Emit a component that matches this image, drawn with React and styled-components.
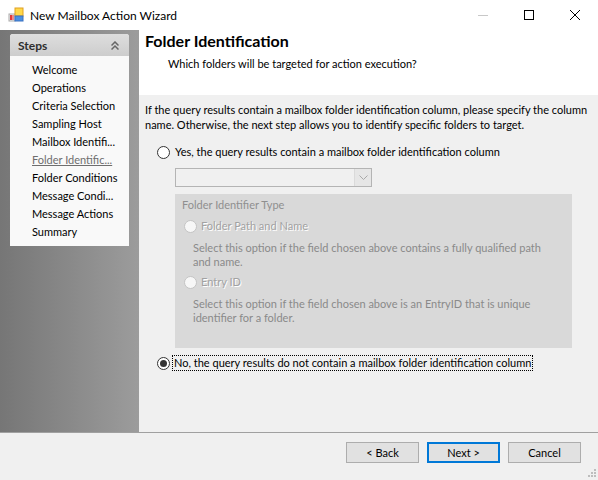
import React from 'react';
import styled, { createGlobalStyle } from 'styled-components';

const Global = createGlobalStyle`
  html, body { margin: 0; padding: 0; background: #f0f0f0; }
  body { font-family: Lato, "Noto Sans", sans-serif; font-size: 11px; color: #000; }
  #root { width: 598px; height: 480px; }
  * { box-sizing: border-box; }
`;

const Window = styled.div`
  width: 598px;
  height: 480px;
  display: flex;
  flex-direction: column;
  overflow: hidden;
  position: relative;
`;

const TitleBar = styled.div`
  height: 30px;
  flex-shrink: 0;
  background: #fff;
  display: flex;
  align-items: center;
  padding-left: 8px;
`;

const TitleText = styled.span`
  margin-left: 6px;
  font-size: 12px;
  color: #000;
`;

const Controls = styled.div`
  margin-left: auto;
  display: flex;
  height: 30px;
`;

const ControlButton = styled.div`
  width: 46px;
  height: 30px;
  display: flex;
  align-items: center;
  justify-content: center;
`;

const Main = styled.div`
  height: 402px;
  flex-shrink: 0;
  display: flex;
`;

const Sidebar = styled.div`
  width: 139px;
  flex-shrink: 0;
  background: linear-gradient(to right, #767676, #9c9c9c);
  padding: 4px 10px 0 10px;
`;

const StepsBox = styled.div`
  background: #f9f9f9;
  border-radius: 3px 3px 0 0;
  overflow: hidden;
`;

const StepsHeader = styled.div`
  height: 22px;
  display: flex;
  align-items: center;
  justify-content: space-between;
  padding: 0 10px 0 8px;
  background: linear-gradient(#dedede, #cdcdcd);
  font-size: 12px;
  font-weight: bold;
  color: #2e2e2e;
`;

const StepsList = styled.div`
  padding: 5px 0 5px 22px;
`;

const StepItem = styled.div`
  line-height: 18px;
  white-space: nowrap;
  color: ${p => (p.$current ? '#6e6e6e' : '#000')};
  text-decoration: ${p => (p.$current ? 'underline' : 'none')};
`;

const Content = styled.div`
  flex: 1;
  display: flex;
  flex-direction: column;
`;

const PageHeader = styled.div`
  height: 65px;
  flex-shrink: 0;
  background: #fff;
  padding: 1px 0 0 6px;
`;

const PageTitle = styled.div`
  font-size: 16px;
  font-weight: bold;
  line-height: 20px;
`;

const PageSubtitle = styled.div`
  margin: 5px 0 0 23px;
  line-height: 16px;
`;

const Body = styled.div`
  flex: 1;
  background: #f0f0f0;
  padding: 7px 8px 0 6px;
  display: flex;
  flex-direction: column;
  align-items: flex-start;
`;

const Paragraph = styled.div`
  line-height: 15px;
  white-space: nowrap;
`;

const RadioRow = styled.div`
  display: flex;
  align-items: center;
  height: 16px;
  margin: ${p => p.$margin || '0'};
  color: ${p => (p.$disabled ? '#a2a2a2' : '#000')};
  text-shadow: ${p => (p.$disabled ? '1px 1px 0 #fff' : 'none')};
`;

const RadioCircle = styled.span`
  width: 13px;
  height: 13px;
  border-radius: 50%;
  flex-shrink: 0;
  border: 1px solid ${p => (p.$disabled ? '#c4c4c4' : '#333')};
  background: ${p => (p.$disabled ? '#f7f7f7' : '#fff')};
  display: flex;
  align-items: center;
  justify-content: center;
  &::after {
    content: '';
    width: 7px;
    height: 7px;
    border-radius: 50%;
    background: ${p => (p.$checked ? '#333' : 'transparent')};
  }
`;

const RadioLabel = styled.span`
  margin-left: ${p => p.$gap || 3}px;
  padding: 0 1px;
  line-height: 14px;
  border: 1px ${p => (p.$focus ? 'dotted #000' : 'solid transparent')};
  white-space: nowrap;
`;

const Combo = styled.div`
  margin: 8px 0 0 30px;
  width: 197px;
  height: 19px;
  border: 1px solid #b4b4b4;
  background: #f0f0f0;
  display: flex;
  justify-content: flex-end;
`;

const ComboButton = styled.div`
  width: 17px;
  height: 100%;
  background: #e6e6e6;
  border-left: 1px solid #dadada;
  display: flex;
  align-items: center;
  justify-content: center;
`;

const Group = styled.div`
  margin: 7px 0 0 30px;
  width: 397px;
  height: 154px;
  background: #d9d9d9;
  padding: 4px 0 0 7px;
`;

const GroupTitle = styled.div`
  line-height: 14px;
  color: #8f8f8f;
`;

const Description = styled.div`
  margin: ${p => p.$margin || '0'};
  padding-left: 11px;
  line-height: 14px;
  color: #8a8a8a;
  white-space: nowrap;
`;

const Footer = styled.div`
  flex: 1;
  border-top: 1px solid #a0a0a0;
  background: #f0f0f0;
  display: flex;
  justify-content: flex-end;
  align-items: flex-start;
  gap: 8px;
  padding: 9px 17px 0 0;
  position: relative;
`;

const Button = styled.div`
  width: 73px;
  height: 21px;
  display: flex;
  align-items: center;
  justify-content: center;
  background: #e1e1e1;
  border: ${p => (p.$default ? '2px solid #0078d7' : '1px solid #adadad')};
  color: #000;
`;

const Grip = styled.svg`
  position: absolute;
  right: 2px;
  bottom: 2px;
`;

const steps = [
  'Welcome',
  'Operations',
  'Criteria Selection',
  'Sampling Host',
  'Mailbox Identifi...',
  'Folder Identific...',
  'Folder Conditions',
  'Message Condi...',
  'Message Actions',
  'Summary',
];

export default function App() {
  return (
    <>
      <Global />
      <Window>
        <TitleBar>
          <svg width="16" height="16" viewBox="0 0 16 16">
            <rect x="1" y="7" width="6" height="7" fill="#f3f3f3" stroke="#a9a9a9" />
            <rect x="2" y="8" width="2" height="5" fill="#e03a3a" />
            <rect x="4" y="8" width="2" height="5" fill="#f08a8a" />
            <rect x="7" y="1" width="8" height="8" fill="#ffd84a" stroke="#e0a020" />
            <rect x="7" y="9" width="8" height="5" fill="#4a90e2" stroke="#3a70c0" />
          </svg>
          <TitleText>New Mailbox Action Wizard</TitleText>
          <Controls>
            <ControlButton>
              <svg width="10" height="10" viewBox="0 0 10 10">
                <line x1="0" y1="5.5" x2="10" y2="5.5" stroke="#c8c8c8" strokeWidth="1" />
              </svg>
            </ControlButton>
            <ControlButton>
              <svg width="10" height="10" viewBox="0 0 10 10">
                <rect x="0.5" y="0.5" width="9" height="9" fill="none" stroke="#000" strokeWidth="1" />
              </svg>
            </ControlButton>
            <ControlButton>
              <svg width="10" height="10" viewBox="0 0 10 10">
                <path d="M0 0 L10 10 M10 0 L0 10" stroke="#000" strokeWidth="1" />
              </svg>
            </ControlButton>
          </Controls>
        </TitleBar>
        <Main>
          <Sidebar>
            <StepsBox>
              <StepsHeader>
                <span>Steps</span>
                <svg width="8" height="9" viewBox="0 0 8 9">
                  <path d="M0.5 4.5 L4 1 L7.5 4.5 M0.5 8.5 L4 5 L7.5 8.5" fill="none" stroke="#666" strokeWidth="1.5" />
                </svg>
              </StepsHeader>
              <StepsList>
                {steps.map(s => (
                  <StepItem key={s} $current={s === 'Folder Identific...'}>
                    {s}
                  </StepItem>
                ))}
              </StepsList>
            </StepsBox>
          </Sidebar>
          <Content>
            <PageHeader>
              <PageTitle>Folder Identification</PageTitle>
              <PageSubtitle>Which folders will be targeted for action execution?</PageSubtitle>
            </PageHeader>
            <Body>
              <Paragraph>
                If the query results contain a mailbox folder identification column, please specify the column
                <br />
                name. Otherwise, the next step allows you to identify specific folders to target.
              </Paragraph>
              <RadioRow $margin="12px 0 0 12px">
                <RadioCircle />
                <RadioLabel>Yes, the query results contain a mailbox folder identification column</RadioLabel>
              </RadioRow>
              <Combo>
                <ComboButton>
                  <svg width="9" height="5" viewBox="0 0 9 5">
                    <path d="M0.5 0.5 L4.5 4.5 L8.5 0.5" fill="none" stroke="#a8a8a8" strokeWidth="1" />
                  </svg>
                </ComboButton>
              </Combo>
              <Group>
                <GroupTitle>Folder Identifier Type</GroupTitle>
                <RadioRow $disabled $margin="6px 0 0 2px">
                  <RadioCircle $disabled />
                  <RadioLabel $gap={2}>Folder Path and Name</RadioLabel>
                </RadioRow>
                <Description $margin="7px 0 0 0">
                  Select this option if the field chosen above contains a fully qualified path
                  <br />
                  and name.
                </Description>
                <RadioRow $disabled $margin="5px 0 0 2px">
                  <RadioCircle $disabled />
                  <RadioLabel $gap={2}>Entry ID</RadioLabel>
                </RadioRow>
                <Description $margin="7px 0 0 0">
                  Select this option if the field chosen above is an EntryID that is unique
                  <br />
                  identifier for a folder.
                </Description>
              </Group>
              <RadioRow $margin="7px 0 0 12px">
                <RadioCircle $checked />
                <RadioLabel $gap={2} $focus>No, the query results do not contain a mailbox folder identification column</RadioLabel>
              </RadioRow>
            </Body>
          </Content>
        </Main>
        <Footer>
          <Button>&lt; Back</Button>
          <Button $default>Next &gt;</Button>
          <Button>Cancel</Button>
          <Grip width="10" height="10" viewBox="0 0 10 10">
            {[[8, 0], [8, 3], [5, 3], [8, 6], [5, 6], [2, 6]].map(([x, y]) => (
              <rect key={`${x}-${y}`} x={x} y={y + 1} width="2" height="2" fill="#bdbdbd" />
            ))}
          </Grip>
        </Footer>
      </Window>
    </>
  );
}
